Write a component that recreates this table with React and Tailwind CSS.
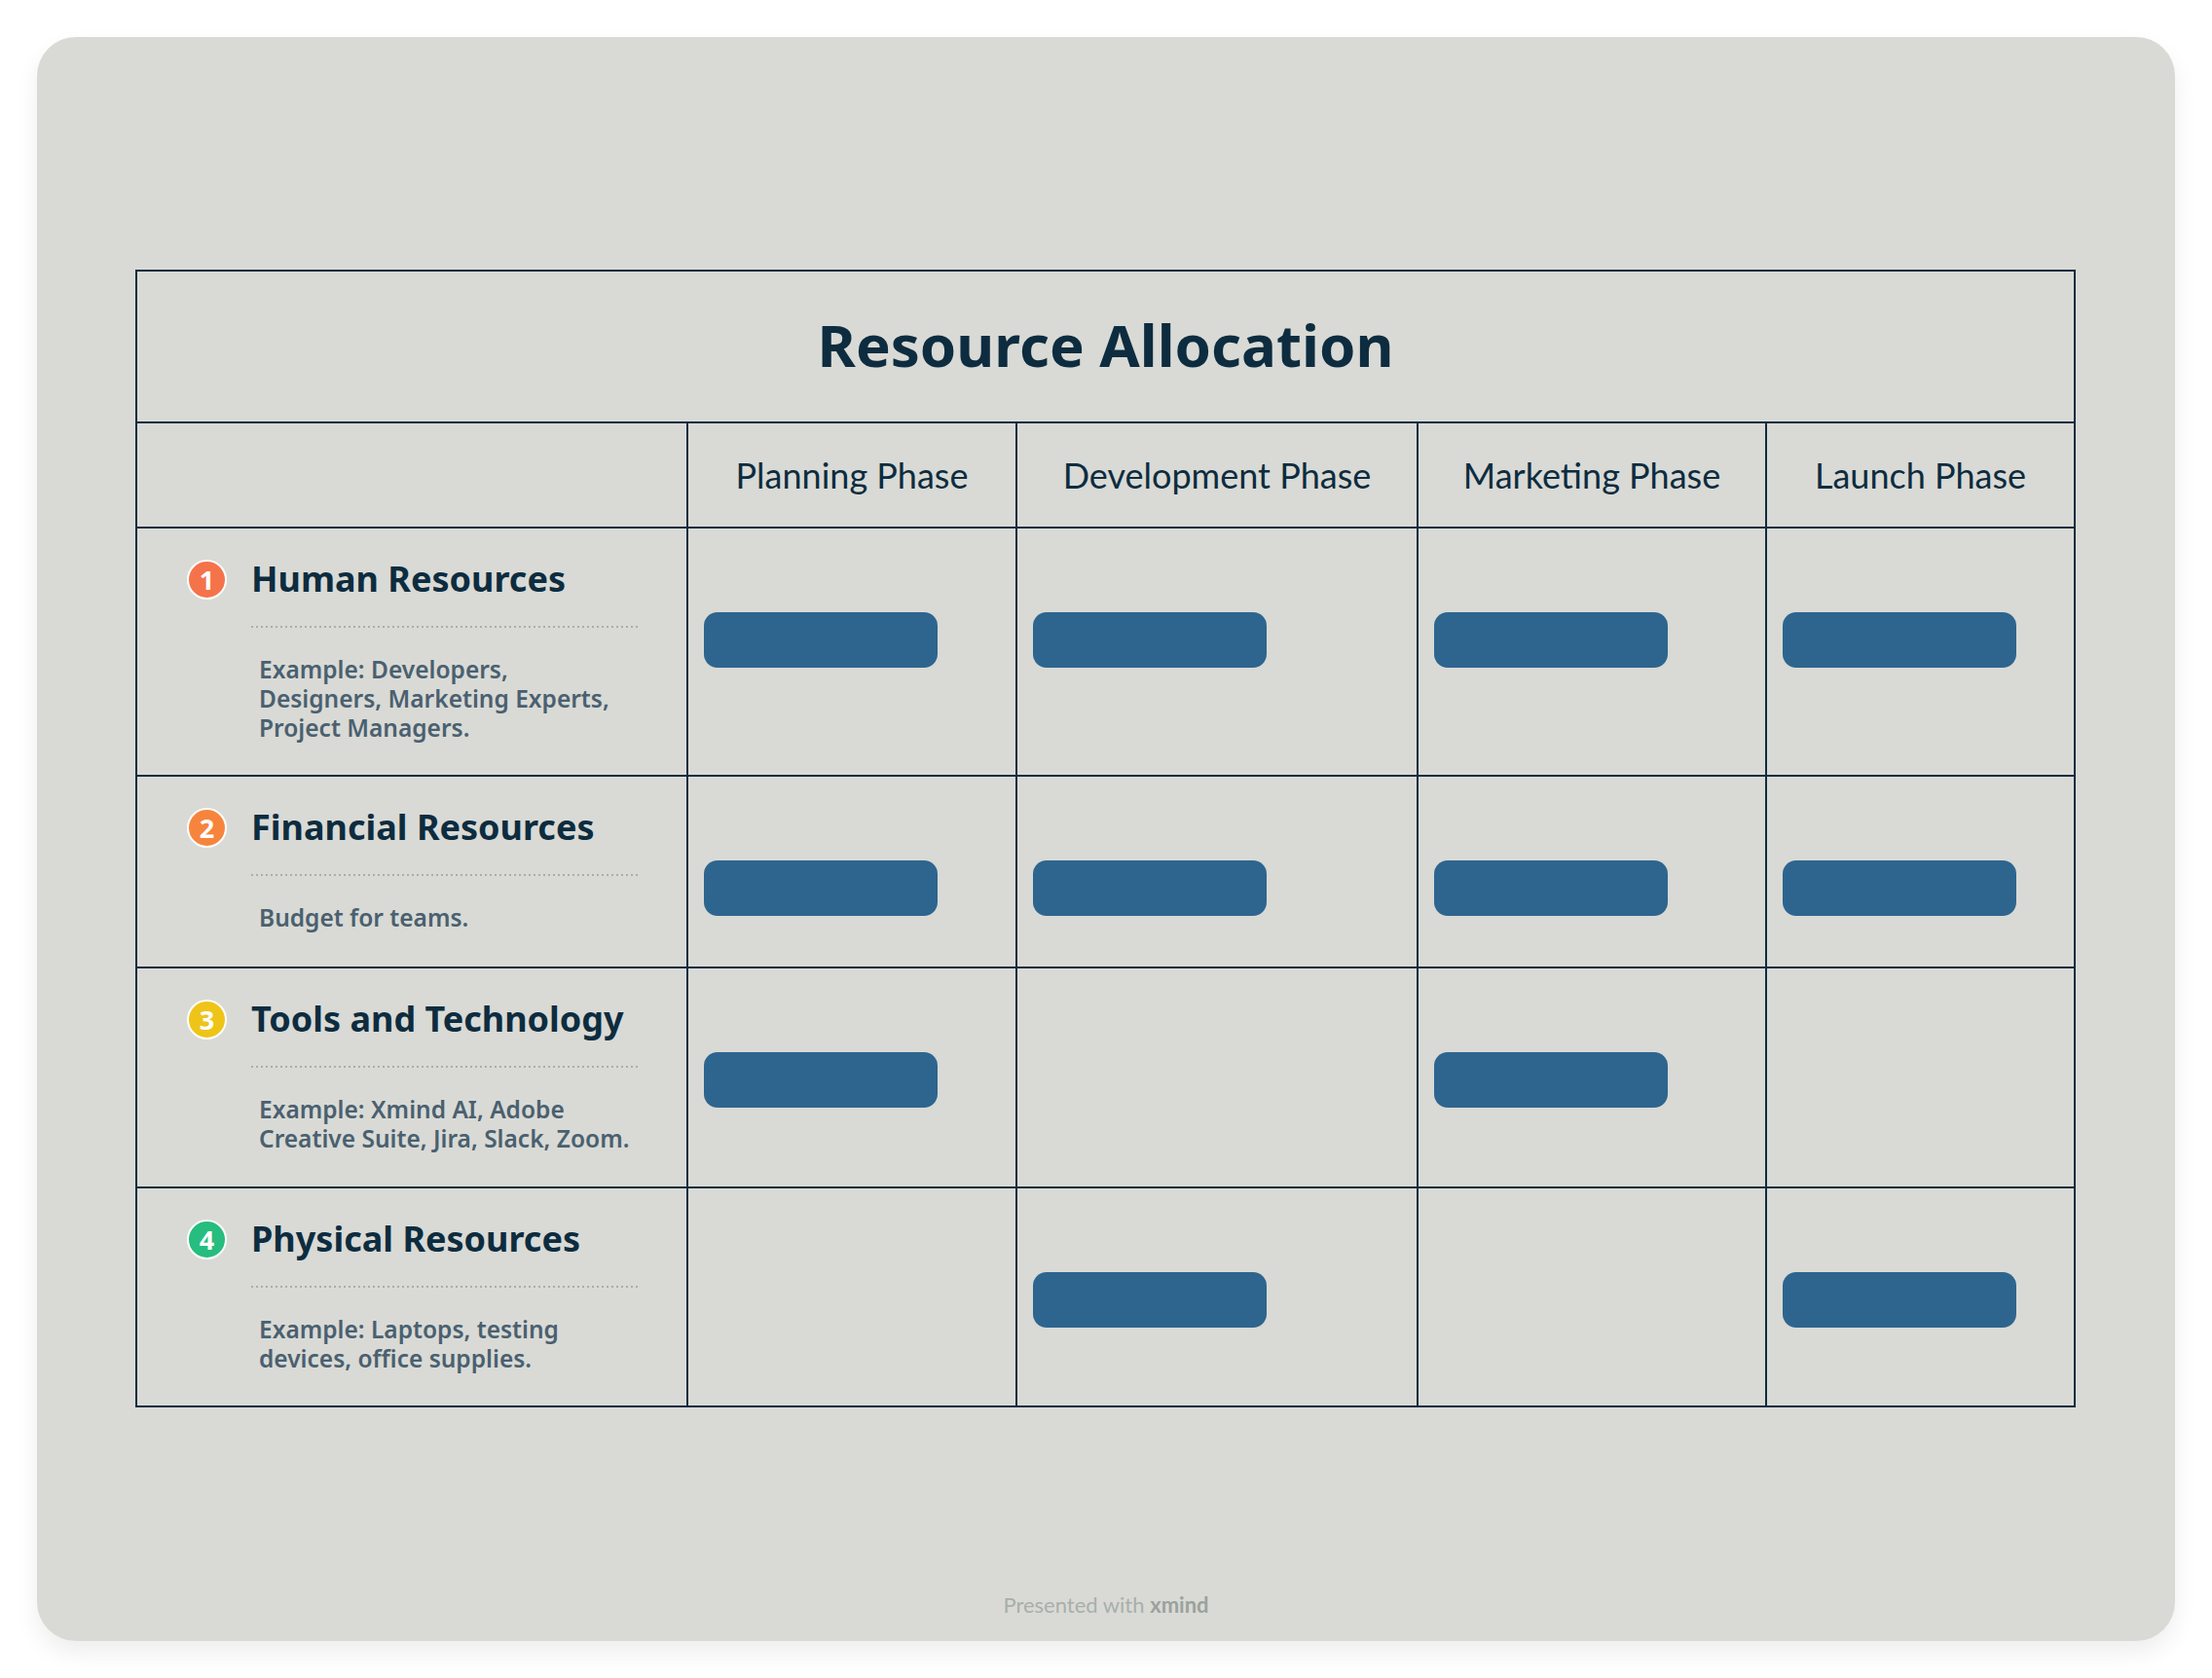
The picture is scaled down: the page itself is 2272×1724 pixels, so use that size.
import React from "react";

const rows = [
  {
    n: "1",
    color: "bg-[#f5734a]",
    title: "Human Resources",
    desc: ["Example: Developers,", "Designers, Marketing Experts,", "Project Managers."],
    bars: [true, true, true, true],
  },
  {
    n: "2",
    color: "bg-[#f7843c]",
    title: "Financial Resources",
    desc: ["Budget for teams."],
    bars: [true, true, true, true],
  },
  {
    n: "3",
    color: "bg-[#efc419]",
    title: "Tools and Technology",
    desc: ["Example: Xmind AI, Adobe", "Creative Suite, Jira, Slack, Zoom."],
    bars: [true, false, true, false],
  },
  {
    n: "4",
    color: "bg-[#26bd7e]",
    title: "Physical Resources",
    desc: ["Example: Laptops, testing", "devices, office supplies."],
    bars: [false, true, false, true],
  },
];

const phases = ["Planning Phase", "Development Phase", "Marketing Phase", "Launch Phase"];

function Bar() {
  return <div className="w-[240px] h-[57px] rounded-[14px] bg-[#2e658f]" />;
}

export default function App() {
  return (
    <div className="w-[2272px] h-[1724px] bg-white pt-[38px] pl-[38px]">
      <div className="w-[2196px] h-[1648px] rounded-[40px] bg-[#d9dad5] flex flex-col shadow-[0_12px_24px_rgba(0,0,0,0.07)]">
        <div className="mt-[239px] ml-[101px] w-[1993px] grid grid-cols-[564px_336px_410px_356px_315px] grid-rows-[154px_106px_253px_195px_224px_223px] gap-[2px] p-[2px] bg-[#0e2d40]">
          <div className="col-span-5 bg-[#d9dad5] flex items-center justify-center pb-[4px]">
            <h1 className="font-['Noto_Sans',sans-serif] font-bold text-[60px] leading-none text-[#0d2c3f]">
              Resource Allocation
            </h1>
          </div>
          <div className="bg-[#d9dad5]" />
          {phases.map((p) => (
            <div key={p} className="bg-[#d9dad5] flex items-center justify-center">
              <span className="font-['Lato',sans-serif] text-[36px] leading-none text-[#0d2c3f]">{p}</span>
            </div>
          ))}
          {rows.map((r) => (
            <React.Fragment key={r.n}>
              <div className="bg-[#d9dad5] pt-[30px] pl-[51px]">
                <div className="flex items-center gap-[25px]">
                  <div className={`w-[41px] h-[41px] rounded-full border-2 border-white ${r.color} flex items-center justify-center`}>
                    <span className="font-['Noto_Sans',sans-serif] font-bold text-[27px] leading-none text-white">{r.n}</span>
                  </div>
                  <div className="font-['Noto_Sans',sans-serif] font-bold text-[36px] leading-[44px] text-[#0d2c3f] whitespace-nowrap">
                    {r.title}
                  </div>
                </div>
                <div className="ml-[66px] w-[398px]">
                  <div className="mt-[26px] h-[2px] bg-[linear-gradient(to_right,#a9aeaa_50%,transparent_50%)] bg-[length:5px_2px]" />
                  <div className="mt-[28px] ml-[8px] font-['Noto_Sans',sans-serif] font-semibold text-[24.5px] leading-[30px] text-[#4a6070] whitespace-nowrap">
                    {r.desc.map((d) => (
                      <div key={d}>{d}</div>
                    ))}
                  </div>
                </div>
              </div>
              {r.bars.map((b, i) => (
                <div key={i} className="bg-[#d9dad5] pt-[86px] pl-[16px]">
                  {b && <Bar />}
                </div>
              ))}
            </React.Fragment>
          ))}
        </div>
        <div className="mt-auto pb-[24px] text-center font-['Lato',sans-serif] text-[22px] leading-[26px] text-[#a8afab]">
          Presented with <span className="font-bold text-[#9aa29e]">xmind</span>
        </div>
      </div>
    </div>
  );
}
